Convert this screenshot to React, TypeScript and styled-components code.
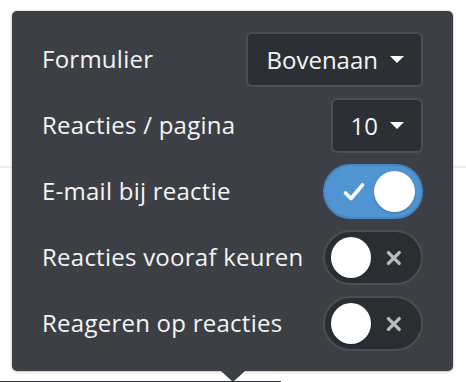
import React, { useState } from 'react';
import styled, { createGlobalStyle } from 'styled-components';

const GlobalStyle = createGlobalStyle`
  html, body {
    margin: 0;
    padding: 0;
    background: #ffffff;
  }
  * {
    box-sizing: border-box;
  }
`;

const Page = styled.div`
  position: relative;
  width: 466px;
  height: 382px;
  overflow: hidden;
  padding-top: 166px;
  display: flex;
  flex-direction: column;
`;

const Divider = styled.div`
  height: 2px;
  background: #ececec;
`;

const Spacer = styled.div`
  flex: 1;
`;

const BottomBar = styled.div`
  width: 281px;
  height: 1px;
  background: #2b2e31;
`;

const Popover = styled.div`
  position: absolute;
  left: 12px;
  top: 11px;
  width: 441px;
  height: 360px;
  padding: 21px 30px 20px;
  background: #3c4044;
  border-radius: 5px;
  box-shadow: 0 0 0 1px rgba(0, 0, 0, 0.06), 0 1px 3px rgba(0, 0, 0, 0.18);
  display: flex;
  flex-direction: column;
  gap: 11px;
  font-family: 'Open Sans', 'Liberation Sans', sans-serif;
  color: #f4f5f6;

  &::after {
    content: '';
    position: absolute;
    left: 209px;
    bottom: -11px;
    border-left: 12px solid transparent;
    border-right: 12px solid transparent;
    border-top: 11px solid #3c4044;
  }
`;

const Row = styled.div`
  height: 55px;
  display: flex;
  align-items: center;
  justify-content: space-between;
`;

const Label = styled.span`
  font-size: 24px;
  line-height: 1;
  letter-spacing: 0.25px;
  margin-top: -2px;
`;

const Select = styled.button`
  height: 55px;
  padding: 0 17px 0 18px;
  display: flex;
  align-items: center;
  gap: 12px;
  background: #2c2f33;
  border: 2px solid #4b4f53;
  border-radius: 6px;
  color: #f4f5f6;
  font-family: inherit;
  font-size: 24px;
  line-height: 1;
  cursor: pointer;
`;

const Caret = styled.span`
  width: 0;
  height: 0;
  border-left: 7px solid transparent;
  border-right: 7px solid transparent;
  border-top: 7px solid #ffffff;
`;

const Track = styled.button<{ $on: boolean }>`
  width: 100px;
  height: 55px;
  padding: 0 6px;
  border-radius: 28px;
  border: 2px solid ${(p) => (p.$on ? '#4786c4' : '#4a4e52')};
  background: ${(p) => (p.$on ? '#5094d2' : '#2a2d31')};
  display: flex;
  align-items: center;
  justify-content: space-between;
  flex-direction: ${(p) => (p.$on ? 'row' : 'row-reverse')};
  cursor: pointer;
`;

const Knob = styled.span`
  width: 41px;
  height: 41px;
  border-radius: 50%;
  background: #ffffff;
  box-shadow: 0 1px 2px rgba(0, 0, 0, 0.25);
`;

const Mark = styled.svg<{ $on: boolean }>`
  width: ${(p) => (p.$on ? 24 : 22)}px;
  height: ${(p) => (p.$on ? 24 : 22)}px;
  margin: ${(p) => (p.$on ? '0 8px 0 11px' : '0 10px 0 12px')};
`;

type ToggleProps = { on: boolean; onToggle: () => void };

const Toggle: React.FC<ToggleProps> = ({ on, onToggle }) => (
  <Track $on={on} onClick={onToggle}>
    {on ? (
      <Mark $on viewBox="0 0 24 24">
        <path
          d="M3.5 13 L9 18.5 L20.5 5"
          fill="none"
          stroke="#ffffff"
          strokeWidth="3.6"
          strokeLinecap="round"
          strokeLinejoin="round"
        />
      </Mark>
    ) : (
      <Mark $on={false} viewBox="0 0 22 22">
        <path
          d="M5.5 5.5 L16.5 16.5 M16.5 5.5 L5.5 16.5"
          fill="none"
          stroke="#b9bcbf"
          strokeWidth="3.4"
          strokeLinecap="round"
        />
      </Mark>
    )}
    <Knob />
  </Track>
);

const App: React.FC = () => {
  const [mail, setMail] = useState(true);
  const [moderate, setModerate] = useState(false);
  const [replies, setReplies] = useState(false);

  return (
    <>
      <GlobalStyle />
      <Page>
        <Divider />
        <Spacer />
        <BottomBar />
        <Popover>
          <Row>
            <Label>Formulier</Label>
            <Select>
              Bovenaan
              <Caret />
            </Select>
          </Row>
          <Row>
            <Label>Reacties / pagina</Label>
            <Select>
              10
              <Caret />
            </Select>
          </Row>
          <Row>
            <Label>E-mail bij reactie</Label>
            <Toggle on={mail} onToggle={() => setMail(!mail)} />
          </Row>
          <Row>
            <Label>Reacties vooraf keuren</Label>
            <Toggle on={moderate} onToggle={() => setModerate(!moderate)} />
          </Row>
          <Row>
            <Label>Reageren op reacties</Label>
            <Toggle on={replies} onToggle={() => setReplies(!replies)} />
          </Row>
        </Popover>
      </Page>
    </>
  );
};

export default App;
